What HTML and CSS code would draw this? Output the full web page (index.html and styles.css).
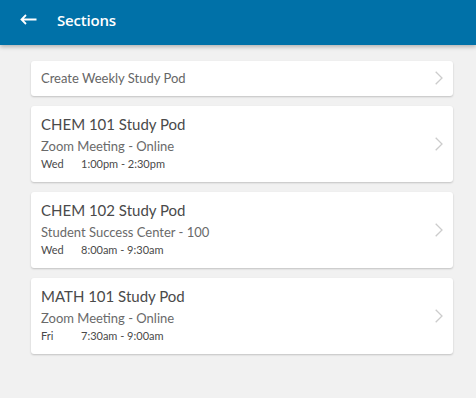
FILE: index.html
```html
<!DOCTYPE html>
<html lang="en">

<head>
    <meta charset="UTF-8">
    <meta name="viewport" content="width=device-width, initial-scale=1.0">
    <title>Sections</title>
    <link rel="stylesheet" href="styles.css">
</head>

<body>
    <header class="topbar">
        <span class="back">
            <svg width="17" height="11" viewBox="0 0 17 11"><path d="M16.5 5.5H1.5M6 1L1.5 5.5 6 10" fill="none" stroke="#fff" stroke-width="1.8"/></svg>
        </span>
        <h1>Sections</h1>
    </header>

    <main class="list">
        <div class="card card-small">
            <span class="create">Create Weekly Study Pod</span>
            <span class="chev"><svg width="8" height="14" viewBox="0 0 8 14"><path d="M0.7 0.7L7 7 0.7 13.3" fill="none" stroke="#ccc" stroke-width="1.3"/></svg></span>
        </div>
        <div class="card">
            <div class="info">
                <div class="title">CHEM 101 Study Pod</div>
                <div class="place">Zoom Meeting - Online</div>
                <div class="when"><span class="day">Wed</span>1:00pm - 2:30pm</div>
            </div>
            <span class="chev"><svg width="8" height="14" viewBox="0 0 8 14"><path d="M0.7 0.7L7 7 0.7 13.3" fill="none" stroke="#ccc" stroke-width="1.3"/></svg></span>
        </div>
        <div class="card">
            <div class="info">
                <div class="title">CHEM 102 Study Pod</div>
                <div class="place">Student Success Center - 100</div>
                <div class="when"><span class="day">Wed</span>8:00am - 9:30am</div>
            </div>
            <span class="chev"><svg width="8" height="14" viewBox="0 0 8 14"><path d="M0.7 0.7L7 7 0.7 13.3" fill="none" stroke="#ccc" stroke-width="1.3"/></svg></span>
        </div>
        <div class="card">
            <div class="info">
                <div class="title">MATH 101 Study Pod</div>
                <div class="place">Zoom Meeting - Online</div>
                <div class="when"><span class="day">Fri</span>7:30am - 9:00am</div>
            </div>
            <span class="chev"><svg width="8" height="14" viewBox="0 0 8 14"><path d="M0.7 0.7L7 7 0.7 13.3" fill="none" stroke="#ccc" stroke-width="1.3"/></svg></span>
        </div>
    </main>
</body>

</html>
```
FILE: styles.css
```css
body {
    margin: 0;
    background: #f1f1f1;
    font-family: Lato, Arial, sans-serif;
    height: 398px;
    overflow: hidden;
}

.topbar {
    box-sizing: border-box;
    height: 45px;
    background: #0071a8;
    display: flex;
    align-items: center;
    padding: 0 0 6px 20px;
    box-shadow: 0 2px 4px rgba(0, 0, 0, 0.25);
}

.back {
    display: flex;
    width: 37px;
}

.topbar h1 {
    margin: 0;
    color: white;
    font-family: "Open Sans", Arial, sans-serif;
    font-size: 15px;
    font-weight: 600;
    letter-spacing: -0.2px;
}

.list {
    display: flex;
    flex-direction: column;
    gap: 10px;
    padding: 16px 23px 0 31px;
}

.card {
    box-sizing: border-box;
    background: white;
    border-radius: 3px;
    box-shadow: 0 1px 2px rgba(0, 0, 0, 0.2);
    display: flex;
    align-items: center;
    justify-content: space-between;
    height: 76px;
    padding: 0 10px;
}

.card-small {
    height: 35px;
    padding-bottom: 1px;
}

.create {
    font-size: 13px;
    color: #666;
}

.chev {
    display: flex;
}

.info {
    align-self: flex-start;
    padding-top: 9px;
}

.title {
    font-size: 15px;
    color: #4a4a4a;
    line-height: 18px;
}

.place {
    font-size: 13px;
    color: #6a6a6a;
    line-height: 16px;
    margin-top: 5px;
}

.when {
    font-size: 11px;
    color: #4a4a4a;
    line-height: 14px;
    margin-top: 3px;
}

.day {
    display: inline-block;
    width: 40px;
}
```
